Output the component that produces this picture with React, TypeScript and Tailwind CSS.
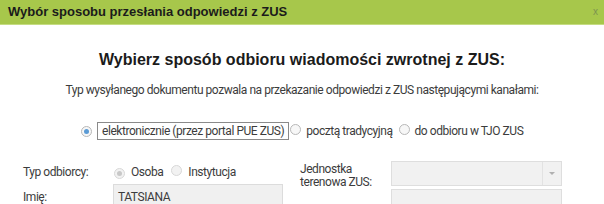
import React from 'react';

function Radio({ checked = false, disabled = false }: { checked?: boolean; disabled?: boolean }) {
  return (
    <span
      className={`inline-flex items-center justify-center w-[11px] h-[11px] rounded-full border ${
        disabled ? 'border-[#d8d8d8] bg-[#f2f2f2]' : 'border-[#b8b8b8] bg-[#f7f7f7]'
      }`}
    >
      {checked && (
        <span className={`w-[5px] h-[5px] rounded-full ${disabled ? 'bg-[#c8c8c8]' : 'bg-[#5b9bd5]'}`} />
      )}
    </span>
  );
}

export default function App() {
  return (
    <div className="w-[604px] h-[204px] overflow-hidden bg-white text-[#3c3c3c] font-['Roboto',sans-serif] tracking-[-0.45px]">
      {/* Header */}
      <div className="h-[25px] bg-[#a7c74b] border-b border-[#c5dc82] flex items-center justify-between pl-2 pr-[6px] tracking-normal">
        <span className="text-[13px] font-bold text-[#1b1b1b] font-['Liberation_Sans',sans-serif]">
          Wybór sposobu przesłania odpowiedzi z ZUS
        </span>
        <span className="text-[10px] text-[#7d9350] leading-none font-['Liberation_Sans',sans-serif]">x</span>
      </div>

      {/* Content */}
      <div className="pt-[25px] text-center text-[16px] font-bold text-[#1b1b1b] leading-[19px] tracking-normal font-['Liberation_Sans',sans-serif]">
        Wybierz sposób odbioru wiadomości zwrotnej z ZUS:
      </div>
      <div className="mt-[13px] text-center text-[12px] leading-[16px]">
        Typ wysyłanego dokumentu pozwala na przekazanie odpowiedzi z ZUS następującymi kanałami:
      </div>

      <div className="mt-[24px] flex items-center pl-[81px] text-[12px] whitespace-nowrap">
        <Radio checked />
        <span className="ml-[5px] px-[4px] border border-[#8a8a8a] leading-[16px]">
          elektronicznie (przez portal PUE ZUS)
        </span>
        <span className="ml-[1px]"><Radio /></span>
        <span className="ml-[5px]">pocztą tradycyjną</span>
        <span className="ml-[6px]"><Radio /></span>
        <span className="ml-[5px]">do odbioru w TJO ZUS</span>
      </div>

      {/* Form */}
      <div className="mt-[21px] flex text-[12px] whitespace-nowrap">
        <div className="pl-[23px] w-[283px] flex flex-col">
          <div className="h-[22px] flex items-center">
            <span className="w-[90px]">Typ odbiorcy:</span>
            <span className="ml-[1px]"><Radio checked disabled /></span>
            <span className="ml-[6px]">Osoba</span>
            <span className="ml-[8px]"><Radio disabled /></span>
            <span className="ml-[6px]">Instytucja</span>
          </div>
          <div className="flex items-start mt-[1px]">
            <span className="w-[90px] pt-[4px]">Imię:</span>
            <div className="flex-1 h-[24px] bg-[#f0f0f0] border border-[#dcdcdc] pl-[4px] pt-[4px] leading-[16px]">
              TATSIANA
            </div>
          </div>
        </div>
        <div className="pl-[17px] flex">
          <div className="w-[91px] leading-[13px] pt-[2px]">
            Jednostka
            <br />
            terenowa ZUS:
          </div>
          <div className="flex flex-col">
            <div className="w-[171px] h-[25px] bg-[#f1f1f1] border border-[#dedede] flex justify-end">
              <div className="w-[19px] border-l border-[#e2e2e2] flex items-center justify-center">
                <span className="w-0 h-0 border-l-[3px] border-r-[3px] border-t-[3px] border-l-transparent border-r-transparent border-t-[#b0b0b0]" />
              </div>
            </div>
            <div className="mt-[3px] w-[171px] h-[24px] bg-[#f1f1f1] border border-[#dedede]" />
          </div>
        </div>
      </div>
    </div>
  );
}
